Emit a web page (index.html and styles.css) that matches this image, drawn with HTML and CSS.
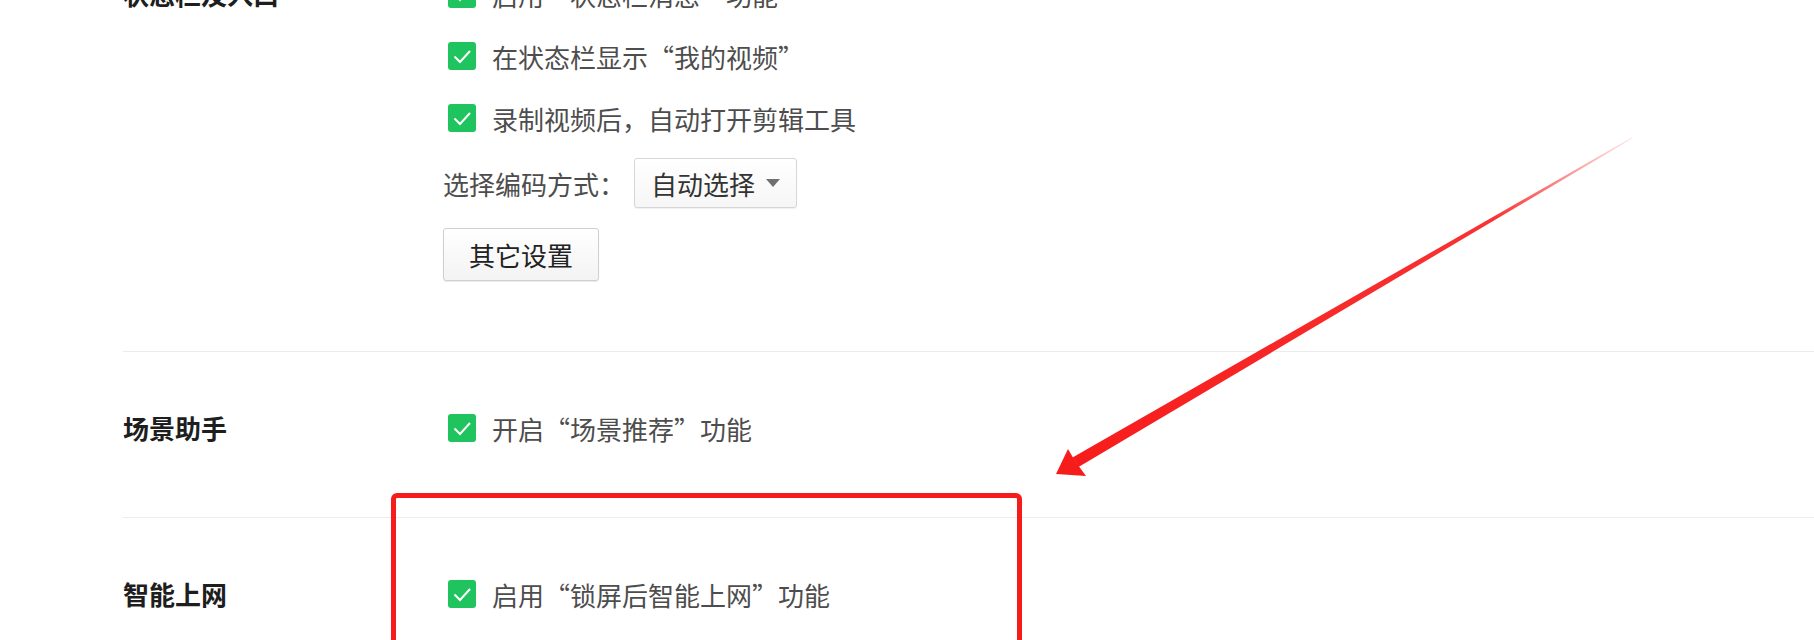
FILE: index.html
```html
<!DOCTYPE html>
<html lang="zh-CN">
<head>
  <meta charset="UTF-8" />
  <title>设置</title>
  <link rel="stylesheet" href="styles.css">
</head>
<body>

  <div class="settings">
    <div class="section first">
      <div class="label">状态栏及入口</div>
      <div class="options">
        <div class="check-row"><span class="check"></span><span>启用“状态栏消息”功能</span></div>
        <div class="check-row"><span class="check"></span><span>在状态栏显示“我的视频”</span></div>
        <div class="check-row"><span class="check"></span><span>录制视频后，自动打开剪辑工具</span></div>
        <div class="select-row">
          <span>选择编码方式：</span>
          <div class="select">自动选择<span class="caret"></span></div>
        </div>
        <div class="btn">其它设置</div>
      </div>
    </div>

    <div class="section">
      <div class="label">场景助手</div>
      <div class="options">
        <div class="check-row"><span class="check"></span><span>开启“场景推荐”功能</span></div>
      </div>
    </div>

    <div class="section last">
      <div class="label">智能上网</div>
      <div class="options">
        <div class="check-row"><span class="check"></span><span>启用“锁屏后智能上网”功能</span></div>
      </div>
    </div>
  </div>

  <!-- 标注：红框 + 箭头 -->
  <div class="mark-box"></div>
  <svg class="mark-arrow" width="1814" height="640" viewBox="0 0 1814 640">
    <defs>
      <linearGradient id="fade" x1="1632" y1="138" x2="1076" y2="462" gradientUnits="userSpaceOnUse">
        <stop offset="0" stop-color="#f71c1c" stop-opacity="0.1" />
        <stop offset="0.25" stop-color="#f71c1c" stop-opacity="0.9" />
        <stop offset="1" stop-color="#f71c1c" />
      </linearGradient>
    </defs>
    <polygon points="1632.3,138.4 1631.7,137.6 1072.5,457.5 1078.5,467" fill="url(#fade)" />
    <polygon points="1056,474 1068,449 1075,461 1086,476" fill="#f71c1c" />
  </svg>

</body>
</html>
```

FILE: styles.css
```css
body {
  margin: 0;
  height: 640px;
  overflow: hidden;
  background: #fff;
  font-family: "Noto Sans CJK SC", "Noto Sans", sans-serif;
  font-size: 26px;
  color: #4d4d4d;
}

.settings {
  margin-top: -37px;
  padding-left: 123px;
}

.section {
  display: flex;
  padding: 45px 0 58px;
  border-bottom: 1px solid #ececec;
}

.section.first {
  padding-top: 0;
  padding-bottom: 70px;
}

.section.last {
  border-bottom: none;
}

.label {
  width: 320px;
  flex: 0 0 320px;
  line-height: 62px;
  font-weight: bold;
  color: #1e1e1e;
}

.options {
  display: flex;
  flex-direction: column;
  align-items: flex-start;
}

.check-row {
  height: 62px;
  display: flex;
  align-items: center;
  padding-left: 5px;
}

.check {
  width: 28px;
  height: 28px;
  margin-right: 16px;
  border-radius: 3px;
  background: #20c45e url("data:image/svg+xml,%3Csvg xmlns='http://www.w3.org/2000/svg' width='28' height='28'%3E%3Cpath d='M6.5 14.5l5.5 5.5 10-11' fill='none' stroke='%23fff' stroke-width='2'/%3E%3C/svg%3E") no-repeat center;
}

.select-row {
  height: 62px;
  margin-top: 3px;
  display: flex;
  align-items: center;
}

.select {
  margin-left: 9px;
  width: 163px;
  height: 50px;
  box-sizing: border-box;
  padding-left: 16px;
  display: flex;
  align-items: center;
  border: 1px solid #d6d6d6;
  border-radius: 3px;
  background: linear-gradient(#fff, #f6f6f6);
  box-shadow: 0 1px 1px rgba(0, 0, 0, 0.06);
  color: #333;
}

.caret {
  margin-left: 11px;
  width: 0;
  height: 0;
  border-left: 7px solid transparent;
  border-right: 7px solid transparent;
  border-top: 8px solid #707070;
}

.btn {
  margin-top: 14px;
  width: 156px;
  height: 53px;
  box-sizing: border-box;
  display: flex;
  align-items: center;
  justify-content: center;
  border: 1px solid #cfcfcf;
  border-radius: 3px;
  background: linear-gradient(#fff, #f3f3f3);
  box-shadow: 0 1px 1px rgba(0, 0, 0, 0.08);
  color: #222;
}

.mark-box {
  position: absolute;
  left: 391px;
  top: 493px;
  width: 631px;
  height: 220px;
  box-sizing: border-box;
  border: 5px solid #f71c1c;
  border-radius: 6px;
}

.mark-arrow {
  position: absolute;
  left: 0;
  top: 0;
  pointer-events: none;
}
```
